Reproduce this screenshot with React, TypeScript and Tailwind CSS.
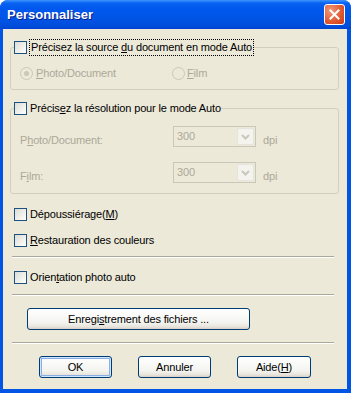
import React from 'react'

const font = { fontFamily: '"Liberation Sans", Arial, sans-serif' }

function Check() {
  return (
    <span className="block w-[13px] h-[13px] shrink-0 border border-[#1c5180] bg-[linear-gradient(135deg,#dcdcd7_0%,#f4f4f0_70%,#ffffff_100%)]" />
  )
}

function Radio({ checked }: { checked?: boolean }) {
  return (
    <span className="flex w-[13px] h-[13px] shrink-0 items-center justify-center rounded-full border border-[#cac8bb]">
      {checked && <span className="block w-[5px] h-[5px] rounded-full bg-[#cac8bb]" />}
    </span>
  )
}

function Combo() {
  return (
    <div className="flex w-[83px] h-[21px] items-center border border-[#c9c7ba]">
      <span className="flex-1 pl-[3px] text-[#aca899]">300</span>
      <span className="mr-px flex w-[17px] h-[17px] items-center justify-center rounded-[2px] border border-[#e6e4dc] bg-[#f4f3ee]">
        <svg width="9" height="6" viewBox="0 0 9 6">
          <path d="M1 1 L4.5 4.5 L8 1" fill="none" stroke="#c9c7ba" strokeWidth="2" />
        </svg>
      </span>
    </div>
  )
}

function Separator() {
  return <div className="ml-[9px] w-[322px] border-t border-b border-t-[#aca899] border-b-white" />
}

function Button({ children, isDefault, className = '' }: { children: React.ReactNode; isDefault?: boolean; className?: string }) {
  return (
    <div
      className={`flex h-[22px] items-center justify-center rounded-[3px] border border-[#003c74] bg-[linear-gradient(to_bottom,#ffffff_0%,#f3f3ef_70%,#e6e3da_90%,#d6d0c5_100%)] ${isDefault ? 'shadow-[inset_0_0_0_1px_#cee7ff,inset_0_0_0_2px_#89ade4]' : ''} ${className}`}
    >
      {children}
    </div>
  )
}

export default function App() {
  return (
    <div className="bg-white w-[351px] h-[393px]" style={font}>
      <div className="flex w-[351px] h-[393px] flex-col overflow-hidden rounded-t-[8px] bg-[#0055e5] text-[11px] leading-[13px] tracking-[-0.15px] text-black">
        <div className="flex h-[29px] shrink-0 items-center justify-between bg-[linear-gradient(to_bottom,#3d95ff_0px,#0a63f0_3px,#0058ee_8px,#0055e5_18px,#004ddc_26px,#0043cf_29px)] pl-[7px] pr-[6px]">
          <span className="pb-[1px] text-[13px] font-bold tracking-normal text-white [text-shadow:1px_1px_#0f1f8f]">Personnaliser</span>
          <span className="flex w-[21px] h-[21px] items-center justify-center rounded-[3px] border border-white bg-[radial-gradient(circle_at_30%_30%,#f0997a,#e0572f_60%,#c43b16)]">
            <svg width="11" height="11" viewBox="0 0 11 11">
              <path d="M1.5 1.5 L9.5 9.5 M9.5 1.5 L1.5 9.5" stroke="white" strokeWidth="2" strokeLinecap="square" />
            </svg>
          </span>
        </div>

        <div className="mb-[4px] ml-[3px] mr-[4px] flex flex-1 flex-col bg-[#ece9d8] pt-[10px]">
          <fieldset className="ml-[7px] w-[329px] rounded-[3px] border border-[#d0d0bf] pb-[9px]">
            <legend className="ml-[3px] flex h-[17px] items-center">
              <Check />
              <span className="ml-[2px] border border-dotted border-black px-[1px] leading-[15px]">
                Précisez la source <u>d</u>u document en mode Auto
              </span>
            </legend>
            <div className="mt-[11px] flex h-[13px] items-center pl-[9px] text-[#aca899]">
              <div className="flex w-[152px] items-center">
                <Radio checked />
                <span className="ml-[3px]">
                  <u>P</u>hoto/Document
                </span>
              </div>
              <Radio />
              <span className="ml-[2px]">
                <u>F</u>ilm
              </span>
            </div>
          </fieldset>

          <fieldset className="ml-[7px] mt-[10px] w-[329px] rounded-[3px] border border-[#d0d0bf] pb-[10px]">
            <legend className="ml-[3px] flex h-[17px] items-center">
              <Check />
              <span className="ml-[3px]">
                Précis<u>e</u>z la résolution pour le mode Auto
              </span>
            </legend>
            <div className="mt-[9px] flex items-start pl-[9px] text-[#aca899]">
              <span className="w-[153px] pt-[8px]">
                P<u>h</u>oto/Document:
              </span>
              <Combo />
              <span className="ml-[7px] pt-[8px]">dpi</span>
            </div>
            <div className="mt-[15px] flex items-start pl-[9px] text-[#aca899]">
              <span className="w-[153px] pt-[8px]">
                F<u>i</u>lm:
              </span>
              <Combo />
              <span className="ml-[7px] pt-[8px]">dpi</span>
            </div>
          </fieldset>

          <div className="ml-[11px] mt-[14px] flex h-[13px] items-center">
            <Check />
            <span className="ml-[3px]">
              Dépoussiérage(<u>M</u>)
            </span>
          </div>
          <div className="ml-[11px] mt-[13px] flex h-[13px] items-center">
            <Check />
            <span className="ml-[3px]">
              <u>R</u>estauration des couleurs
            </span>
          </div>

          <div className="mt-[9px]">
            <Separator />
          </div>

          <div className="ml-[11px] mt-[13px] flex h-[13px] items-center">
            <Check />
            <span className="ml-[3px]">
              Orien<u>t</u>ation photo auto
            </span>
          </div>

          <div className="mt-[10px]">
            <Separator />
          </div>

          <div className="ml-[24px] mt-[12px]">
            <Button className="w-[223px]">
              Enregi<u>s</u>trement des fichiers ...
            </Button>
          </div>

          <div className="mt-[12px]">
            <Separator />
          </div>

          <div className="ml-[36px] mt-[12px] flex gap-[26px]">
            <Button isDefault className="w-[73px]">
              OK
            </Button>
            <Button className="w-[73px]">Annuler</Button>
            <Button className="w-[74px]">
              Aide(<u>H</u>)
            </Button>
          </div>
        </div>
      </div>
    </div>
  )
}
